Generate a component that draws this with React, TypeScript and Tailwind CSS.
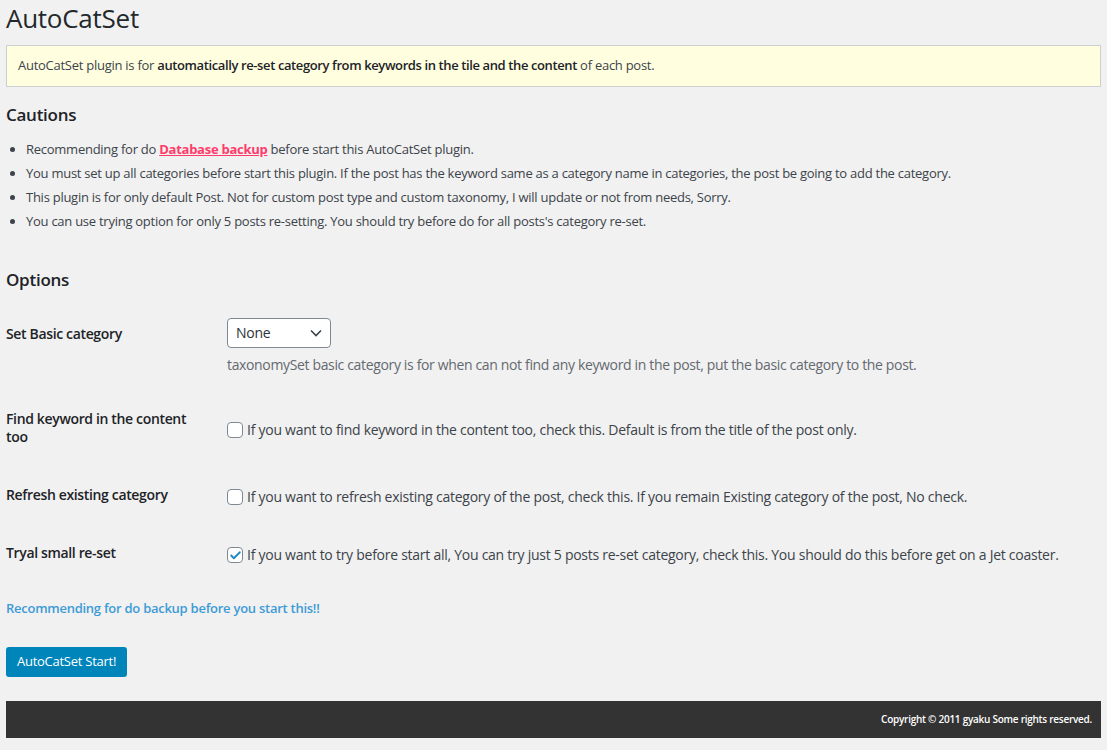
import { Check } from "lucide-react"

const font = { fontFamily: '"Segoe UI", "Open Sans", sans-serif' }

const cautions = [
  "You must set up all categories before start this plugin. If the post has the keyword same as a category name in categories, the post be going to add the category.",
  "This plugin is for only default Post. Not for custom post type and custom taxonomy, I will update or not from needs, Sorry.",
  "You can use trying option for only 5 posts re-setting. You should try before do for all posts's category re-set.",
]

function Checkbox({ checked }: { checked?: boolean }) {
  return (
    <span className="w-4 h-4 shrink-0 rounded-[4px] border border-[#7e8993] bg-white flex items-center justify-center">
      {checked && <Check className="w-[13px] h-[13px] text-[#1e8cbe]" strokeWidth={3.5} />}
    </span>
  )
}

function CheckRow({ label, text, checked }: { label: string; text: string; checked?: boolean }) {
  return (
    <div className="flex">
      <div className="w-[221px] shrink-0 py-5 pr-[21px] text-sm font-semibold leading-[18px] tracking-[-0.025em] text-[#1d2327]">{label}</div>
      <div className="flex items-center gap-1 pt-[19px] pb-[15px] text-sm text-[#3c434a]">
        <Checkbox checked={checked} />
        <span>{text}</span>
      </div>
    </div>
  )
}

export default function App() {
  return (
    <div className="min-h-[750px] bg-[#f1f1f1] px-[6px] text-[13px] tracking-[-0.02em] text-[#3c434a]" style={font}>
      <h1 className="pt-[2px] text-[26px] font-medium leading-[32px] tracking-[-0.01em] text-[#23282d]">AutoCatSet</h1>

      {/* Notice */}
      <div className="mt-[11px] h-[42px] flex items-center px-[11px] border border-[#ccd0d4] bg-[#ffffe0]">
        <p>
          AutoCatSet plugin is for <b className="font-semibold tracking-[-0.03em] text-[#1d2327]">automatically re-set category from keywords in the tile and the content</b> of each post.
        </p>
      </div>

      {/* Cautions */}
      <h2 className="mt-[17px] text-[17px] font-semibold leading-[22px] text-[#1d2327]">Cautions</h2>
      <ul className="mt-[14px] pl-[20px] list-disc">
        <li className="mb-[6px] leading-[18px]">
          Recommending for do{" "}
          <a href="#" className="font-bold text-[#ff3b6b] underline">Database backup</a> before start this AutoCatSet plugin.
        </li>
        {cautions.map((c) => (
          <li key={c} className="mb-[6px] leading-[18px]">{c}</li>
        ))}
      </ul>

      {/* Options */}
      <h2 className="mt-[39px] text-[17px] font-semibold leading-[22px] text-[#1d2327]">Options</h2>

      <div className="mt-[14px]">
        <div className="flex">
          <div className="w-[221px] shrink-0 py-5 pr-[21px] text-sm font-semibold leading-[18px] tracking-[-0.025em] text-[#1d2327]">Set Basic category</div>
          <div className="pt-[13px] pb-[15px]">
            <div className="w-[104px] h-[30px] rounded-[4px] border border-[#7e8993] bg-white flex items-center justify-between pl-[8px] pr-[8px] text-sm text-[#2c3338]">
              <span>None</span>
              <svg width="12" height="8" viewBox="0 0 12 8" fill="none" stroke="#3c434a" strokeWidth="1.6">
                <polyline points="1,1.5 6,6.5 11,1.5" />
              </svg>
            </div>
            <p className="mt-[7px] text-sm leading-[20px] tracking-[-0.025em] text-[#646970]">
              taxonomySet basic category is for when can not find any keyword in the post, put the basic category to the post.
            </p>
          </div>
        </div>

        <CheckRow
          label="Find keyword in the content too"
          text="If you want to find keyword in the content too, check this. Default is from the title of the post only."
        />
        <CheckRow
          label="Refresh existing category"
          text="If you want to refresh existing category of the post, check this. If you remain Existing category of the post, No check."
        />
        <CheckRow
          label="Tryal small re-set"
          text="If you want to try before start all, You can try just 5 posts re-set category, check this. You should do this before get on a Jet coaster."
          checked
        />
      </div>

      <p className="mt-[16px] font-semibold leading-[20px] text-[#3d9bd6]">Recommending for do backup before you start this!!</p>

      <button className="mt-[29px] h-[30px] px-[11px] rounded-[3px] bg-[#0085ba] text-[13px] text-white">AutoCatSet Start!</button>

      <footer className="mt-[24px] h-[37px] bg-[#333] flex items-center justify-end pr-[9px]">
        <span className="text-[10px] font-semibold text-white">Copyright © 2011 gyaku Some rights reserved.</span>
      </footer>
    </div>
  )
}
